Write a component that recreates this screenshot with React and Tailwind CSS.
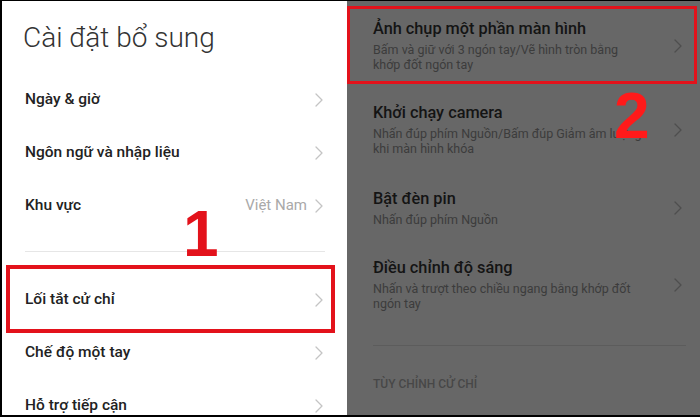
import React from "react";

function Chevron({ color = "#c4c4c4" }) {
  return (
    <svg width="8" height="14" viewBox="0 0 8 14" fill="none">
      <polyline points="1,1 7,7 1,13" stroke={color} strokeWidth="1.3" strokeLinecap="round" strokeLinejoin="round" />
    </svg>
  );
}

function LeftRow({ label, value }) {
  return (
    <div className="h-[53px] shrink-0 flex items-center justify-between pl-[23px] pr-[24px]">
      <span className="text-[15.5px] font-medium text-[#222]">{label}</span>
      <div className="flex items-center gap-[8px]">
        {value && <span className="text-[15px] text-[#a9a9a9]">{value}</span>}
        <Chevron />
      </div>
    </div>
  );
}

function RightItem({ title, lines }) {
  return (
    <div className="shrink-0 flex items-center justify-between pt-[15px] pb-[16px] pr-[18px]">
      <div>
        <div className="text-[16.3px] leading-[20px] font-medium text-[#141414]">{title}</div>
        <div className="mt-[3px] text-[12.5px] leading-[15px] text-[#3c3c3c]">
          {lines.map((l, i) => (
            <div key={i}>{l}</div>
          ))}
        </div>
      </div>
      <Chevron color="#4e4e4e" />
    </div>
  );
}

export default function App() {
  return (
    <div
      className="relative w-[700px] h-[417px] overflow-hidden flex border-t border-l-2 border-b-2 border-black bg-white"
      style={{ fontFamily: "Roboto, 'Noto Sans', sans-serif" }}
    >
      <div className="w-[345px] shrink-0 bg-white flex flex-col">
        <div className="h-[72px] shrink-0 pl-[21px] pt-[20px] text-[28px] leading-[34px] font-light text-[#333]">
          Cài đặt bổ sung
        </div>
        <LeftRow label="Ngày & giờ" />
        <LeftRow label="Ngôn ngữ và nhập liệu" />
        <LeftRow label="Khu vực" value="Việt Nam" />
        <div className="shrink-0 pt-[19px] pb-[21px] pl-[23px] pr-[22px]">
          <div className="h-px bg-[#e6e6e6]" />
        </div>
        <LeftRow label="Lối tắt cử chỉ" />
        <LeftRow label="Chế độ một tay" />
        <LeftRow label="Hỗ trợ tiếp cận" />
      </div>
      <div className="flex-1 bg-[#676767] pl-[26px] pt-[3px] flex flex-col">
        <RightItem
          title="Ảnh chụp một phần màn hình"
          lines={["Bấm và giữ với 3 ngón tay/Vẽ hình tròn bằng", "khớp đốt ngón tay"]}
        />
        <RightItem
          title="Khởi chạy camera"
          lines={["Nhấn đúp phím Nguồn/Bấm đúp Giảm âm lượng", "khi màn hình khóa"]}
        />
        <div className="pt-[2px]">
          <RightItem title="Bật đèn pin" lines={["Nhấn đúp phím Nguồn"]} />
        </div>
        <RightItem
          title="Điều chỉnh độ sáng"
          lines={["Nhấn và trượt theo chiều ngang bằng khớp đốt", "ngón tay"]}
        />
        <div className="mt-[18px] mr-[14px] h-px shrink-0 bg-[#5c5c5c]" />
        <div className="mt-[30px] text-[12px] leading-[16px] font-medium text-[#474747]">TÙY CHỈNH CỬ CHỈ</div>
      </div>

      <div className="absolute left-[4px] top-[264px] w-[329px] h-[68px] border-[4px] border-[#e3121b]" />
      <div className="absolute left-[345px] top-[5px] w-[350px] h-[78px] border-[3px] border-[#e3121b]" />
      <div
        className="absolute left-[181px] top-[201px] text-[64px] leading-[64px] font-bold text-[#e3121b]"
        style={{ fontFamily: "'Liberation Sans', Arial, sans-serif" }}
      >
        1
      </div>
      <div
        className="absolute left-[612px] top-[83px] text-[64px] leading-[64px] font-bold text-[#ff1a1a]"
        style={{ fontFamily: "'Liberation Sans', Arial, sans-serif" }}
      >
        2
      </div>
    </div>
  );
}
